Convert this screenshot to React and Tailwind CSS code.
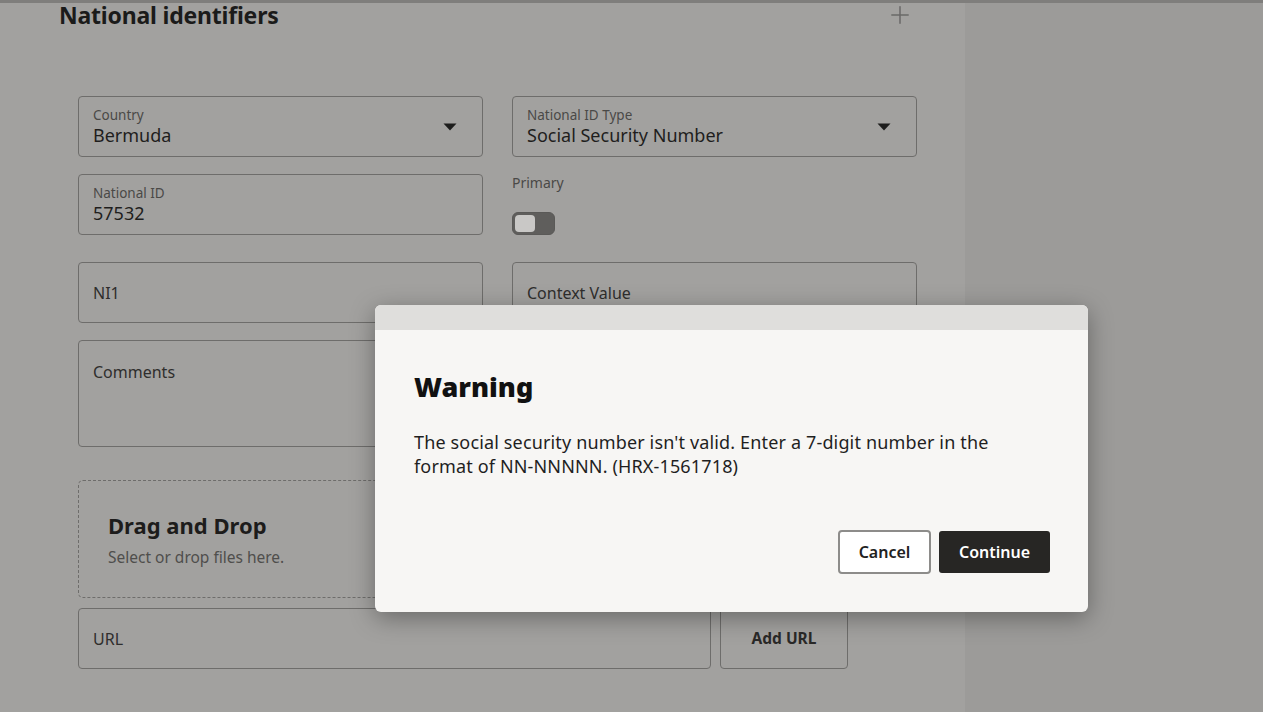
import { Plus } from 'lucide-react';

const Caret = () => (
  <svg width="14" height="8" viewBox="0 0 14 8" className="shrink-0">
    <path d="M0.5 0.5 L13.5 0.5 L7 7.5 Z" fill="#1d1d1c" />
  </svg>
);

const SelectField = ({ label, value, caret = true }) => (
  <div className="h-[61px] border border-[#6e6d6b] rounded-[4px] pl-[14px] pr-[25px] flex items-center justify-between">
    <div className="flex flex-col">
      <span className="text-[13.5px] leading-[17px] text-[#4a4947]">{label}</span>
      <span className="text-[18px] leading-[22px] text-[#1f1e1d]">{value}</span>
    </div>
    {caret ? <Caret /> : null}
  </div>
);

const PlainField = ({ label, className = '' }) => (
  <div className={`border border-[#6e6d6b] rounded-[4px] pl-[14px] ${className}`}>
    <span className="text-[16px] text-[#2f2e2d]">{label}</span>
  </div>
);

const App = () => {
  return (
    <div
      className="relative w-[1263px] h-[712px] overflow-hidden bg-[#a2a19f] flex"
      style={{ fontFamily: '"Noto Sans", Lato, sans-serif' }}
    >
      <div className="absolute top-0 left-0 right-0 h-[3px] bg-[#7f7e7c]" />

      <div className="w-[965px] shrink-0 pl-[59px] pt-[1px]">
        <div className="flex items-center justify-between w-[853px]">
          <h1 className="text-[23px] leading-[28px] font-bold text-[#1b1b1a] tracking-[-0.2px]">National identifiers</h1>
          <Plus className="w-[28px] h-[28px] text-[#6a6968] -mr-[2px]" strokeWidth={1.3} />
        </div>

        <div className="pl-[19px] mt-[67px] w-[857px]">
          <div className="grid grid-cols-[405px_405px] gap-x-[29px]">
            <SelectField label="Country" value="Bermuda" />
            <SelectField label="National ID Type" value="Social Security Number" />
          </div>

          <div className="grid grid-cols-[405px_405px] gap-x-[29px] mt-[17px]">
            <SelectField label="National ID" value="57532" caret={false} />
            <div className="flex flex-col">
              <span className="text-[14px] leading-[18px] text-[#4a4947]">Primary</span>
              <div className="mt-[20px] w-[43px] h-[23px] rounded-[6px] bg-[#5f5e5c] border border-[#5a5957] p-[2px]">
                <div className="w-[20px] h-full rounded-[4px] bg-[#c9c8c6]" />
              </div>
            </div>
          </div>

          <div className="grid grid-cols-[405px_405px] gap-x-[29px] mt-[27px]">
            <PlainField label="NI1" className="h-[61px] flex items-center" />
            <PlainField label="Context Value" className="h-[61px] flex items-center" />
          </div>

          <div className="grid grid-cols-[405px_405px] gap-x-[29px] mt-[17px]">
            <PlainField label="Comments" className="h-[107px] pt-[19px]" />
          </div>

          <div className="mt-[33px] w-[770px] h-[118px] border border-dashed border-[#6e6d6b] rounded-[5px] pl-[29px] pt-[30px]">
            <div className="text-[22px] leading-[28px] font-bold text-[#1d1c1b]">Drag and Drop</div>
            <div className="text-[15.5px] leading-[20px] mt-[8px] text-[#4f4e4c]">Select or drop files here.</div>
          </div>

          <div className="flex gap-[9px] mt-[10px]">
            <PlainField label="URL" className="w-[633px] h-[61px] flex items-center" />
            <div className="w-[128px] h-[61px] border border-[#6e6d6b] rounded-[4px] flex items-center justify-center">
              <span className="text-[15.5px] font-bold text-[#2a2928]">Add URL</span>
            </div>
          </div>
        </div>
      </div>

      <div className="flex-1 bg-[#9c9b99]" />

      <div className="absolute left-[375px] top-[305px] w-[713px] h-[307px] rounded-[6px] overflow-hidden bg-[#f7f6f4] shadow-[0_6px_24px_rgba(0,0,0,0.35)] flex flex-col">
        <div className="h-[25px] bg-[#dfdedc] shrink-0" />
        <div className="flex-1 flex flex-col pl-[39px] pr-[38px] pb-[38px]">
          <h2 className="mt-[41px] text-[27px] leading-[32px] font-black text-[#111]">Warning</h2>
          <p className="mt-[27px] text-[18px] leading-[24px] tracking-[0.15px] text-[#1f1f1f] w-[600px]">
            The social security number isn't valid. Enter a 7-digit number in the format of NN-NNNNN. (HRX-1561718)
          </p>
          <div className="mt-auto flex justify-end gap-[8px] items-center">
            <button className="w-[93px] h-[44px] rounded-[4px] border-2 border-[#8d8c8a] bg-white text-[16px] font-semibold text-[#222]">
              Cancel
            </button>
            <button className="w-[111px] h-[42px] rounded-[3px] bg-[#272624] text-[16px] font-semibold text-white">
              Continue
            </button>
          </div>
        </div>
      </div>
    </div>
  );
};

export default App;
